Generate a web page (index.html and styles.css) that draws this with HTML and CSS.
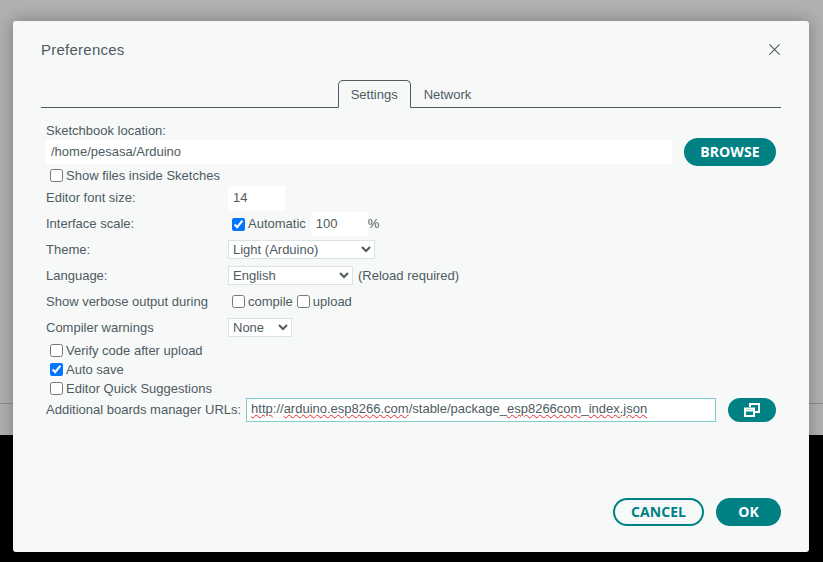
FILE: index.html
```html
<!DOCTYPE html>
<html lang="en">
<head>
    <meta charset="UTF-8">
    <title>Preferences</title>
    <link rel="stylesheet" href="styles.css">
</head>
<body>
<div class="backdrop">
    <div class="backdrop-top"></div>
    <div class="backdrop-status"></div>
    <div class="backdrop-console"></div>
</div>

<div class="dialog">
    <div class="dialog-head">
        <span class="dialog-title">Preferences</span>
        <svg class="close-icon" width="11" height="11" viewBox="0 0 11 11">
            <path d="M.4.4l10.200 10.200M10.600.4L.4 10.600" stroke="#4e5b61" stroke-width="1.100" fill="none"/>
        </svg>
    </div>

    <div class="tabs">
        <span class="tab tab-active">Settings</span>
        <span class="tab">Network</span>
    </div>

    <div class="settings">
        <div class="row row-caption">Sketchbook location:</div>
        <div class="row row-browse">
            <input class="field field-path" type="text" value="/home/pesasa/Arduino">
            <button class="btn btn-solid btn-browse">BROWSE</button>
        </div>
        <label class="row row-check"><input type="checkbox">Show files inside Sketches</label>
        <div class="row row-field">
            <span class="name">Editor font size:</span>
            <input class="field field-small" type="text" value="14">
        </div>
        <div class="row row-field row-scale">
            <span class="name">Interface scale:</span>
            <label class="opt"><input type="checkbox" checked>Automatic</label>
            <input class="field field-small field-scale" type="text" value="100">
            <span class="unit">%</span>
        </div>
        <div class="row row-select row-theme">
            <span class="name">Theme:</span>
            <select class="pick pick-theme"><option>Light (Arduino)</option></select>
        </div>
        <div class="row row-select row-language">
            <span class="name">Language:</span>
            <select class="pick pick-language"><option>English</option></select>
            <span class="note">(Reload required)</span>
        </div>
        <div class="row row-verbose">
            <span class="name">Show verbose output during</span>
            <label class="opt"><input type="checkbox">compile</label>
            <label class="opt"><input type="checkbox">upload</label>
        </div>
        <div class="row row-select row-warnings">
            <span class="name">Compiler warnings</span>
            <select class="pick pick-warnings"><option>None</option></select>
        </div>
        <label class="row row-check row-first"><input type="checkbox">Verify code after upload</label>
        <label class="row row-check"><input type="checkbox" checked>Auto save</label>
        <label class="row row-check"><input type="checkbox">Editor Quick Suggestions</label>
        <div class="row row-urls">
            <span class="urls-name">Additional boards manager URLs:</span>
            <div class="field field-urls"><span class="typo">http</span>://<span class="typo">arduino.esp8266.com</span>/stable/package_<span class="typo">esp8266com</span>_<span class="typo">index.json</span></div>
            <button class="btn btn-solid btn-icon">
                <svg width="16" height="14" viewBox="0 0 16 14">
                    <path d="M6 4V1h9v8h-4" stroke="#fff" stroke-width="2" fill="none"/>
                    <path d="M1 5.500h9V13H1z" stroke="#fff" stroke-width="2" fill="none"/>
                    <path d="M1 7.500h9" stroke="#fff" stroke-width="2" fill="none"/>
                </svg>
            </button>
        </div>
    </div>

    <div class="dialog-foot">
        <button class="btn btn-outline">CANCEL</button>
        <button class="btn btn-solid btn-ok">OK</button>
    </div>
</div>
</body>
</html>
```

FILE: styles.css
```css
html, body {
    margin: 0;
    height: 100%;
    overflow: hidden;
}
body {
    font-family: "Liberation Sans", Arial, sans-serif;
    font-size: 13px;
    color: #4e5b61;
}
.backdrop {
    height: 562px;
    display: flex;
    flex-direction: column;
}
.backdrop-top {
    height: 403px;
    background: #b0b0b0;
}
.backdrop-status {
    height: 31px;
    background: #b0b0b0;
    border-top: 1px solid #8c8c8c;
}
.backdrop-console {
    flex: 1;
    background: #000;
}

/* dialog floats over the page */
.dialog {
    position: absolute;
    left: 13px;
    top: 21px;
    width: 796px;
    height: 531px;
    box-sizing: border-box;
    padding: 0 28px 26px;
    display: flex;
    flex-direction: column;
    background: #f7f9f9;
    border-radius: 3px;
    box-shadow: 0 0 16px rgba(0, 0, 0, .3);
}
.dialog-head {
    height: 59px;
    padding: 19px 1px 0 0;
    box-sizing: border-box;
    display: flex;
    justify-content: space-between;
    align-items: flex-start;
}
.dialog-title {
    font-size: 15px;
    line-height: 19px;
    letter-spacing: .25px;
}
.close-icon {
    margin: 4px 0 0;
}

.tabs {
    height: 28px;
    box-sizing: border-box;
    display: flex;
    justify-content: center;
    border-bottom: 1px solid #4e5b61;
}
.tab {
    height: 27px;
    box-sizing: border-box;
    padding: 0 13px;
    line-height: 29px;
}
.tab-active {
    height: 28px;
    border: 1px solid #4e5b61;
    border-bottom-color: #f7f9f9;
    border-radius: 5px 5px 0 0;
    padding: 0 12px;
    line-height: 27px;
}

.settings {
    padding: 14px 5px 0;
}
.row {
    display: flex;
    align-items: center;
}
.row-caption {
    height: 16px;
}
.row-browse {
    height: 28px;
    justify-content: space-between;
}
.row-check {
    height: 19px;
    padding-left: 4px;
}
.row-first {
    margin-top: 4px;
}
.row-field {
    height: 24px;
    margin-top: 1px;
}
.row-field .name,
.urls-name,
.unit {
    margin-bottom: 2px;
}
.row-scale {
    margin-top: 2px;
}
.row-scale .opt {
    margin-bottom: 2px;
}
.row-scale input[type=checkbox] {
    margin-top: 2px;
}
.row-select {
    height: 19px;
}
.row-theme {
    margin-top: 4px;
}
.row-language {
    margin-top: 7px;
}
.row-warnings {
    margin-top: 8px;
}
.row-verbose {
    height: 18px;
    margin-top: 7px;
}
.row-urls {
    height: 24px;
}

.name {
    width: 182px;
    flex: none;
}
.opt {
    display: flex;
    align-items: center;
    margin-right: 4px;
}
.opt:first-of-type {
    margin-left: 4px;
}
input[type=checkbox] {
    width: 13px;
    height: 13px;
    margin: 0 3px 0 0;
}

.field {
    height: 24px;
    box-sizing: border-box;
    border: 0;
    padding: 0 5px 2px;
    background: #fff;
    font: 13px "Liberation Sans", Arial, sans-serif;
    color: #4e5b61;
    outline: none;
}
.field-path {
    width: 626px;
}
.field-small {
    width: 57px;
}
.field-scale {
    margin-left: 1px;
}
.field-urls {
    width: 470px;
    margin-left: 5px;
    border: 1px solid #7fcbcd;
    padding: 0 4px;
    line-height: 20px;
    white-space: nowrap;
}
.urls-name {
    flex: none;
}
.typo {
    text-decoration: underline wavy #e2272e .8px;
    text-underline-offset: 1px;
}

.pick {
    height: 19px;
    box-sizing: border-box;
    border: 1px solid #dae3e3;
    border-radius: 0;
    background-color: #fff;
    font: 13px "Liberation Sans", Arial, sans-serif;
    color: #4e5b61;
    outline: none;
}
.pick-theme {
    width: 147px;
}
.pick-language {
    width: 125px;
}
.pick-warnings {
    width: 64px;
}
.note {
    margin-left: 5px;
}

.btn {
    box-sizing: border-box;
    height: 28px;
    border-radius: 14px;
    border: 0;
    padding: 0 0 2px;
    font: 700 14px "Open Sans", sans-serif;
    letter-spacing: .1px;
    display: flex;
    align-items: center;
    justify-content: center;
}
.btn-solid {
    background: #008184;
    color: #fff;
}
.btn-browse {
    width: 92px;
}
.btn-icon {
    width: 48px;
    height: 24px;
    margin-left: 12px;
    padding: 0;
}
.btn-outline {
    width: 91px;
    background: transparent;
    border: 2px solid #008184;
    color: #008184;
}
.btn-ok {
    width: 65px;
}
.dialog-foot {
    margin-top: auto;
    display: flex;
    justify-content: flex-end;
    gap: 12px;
}
```
